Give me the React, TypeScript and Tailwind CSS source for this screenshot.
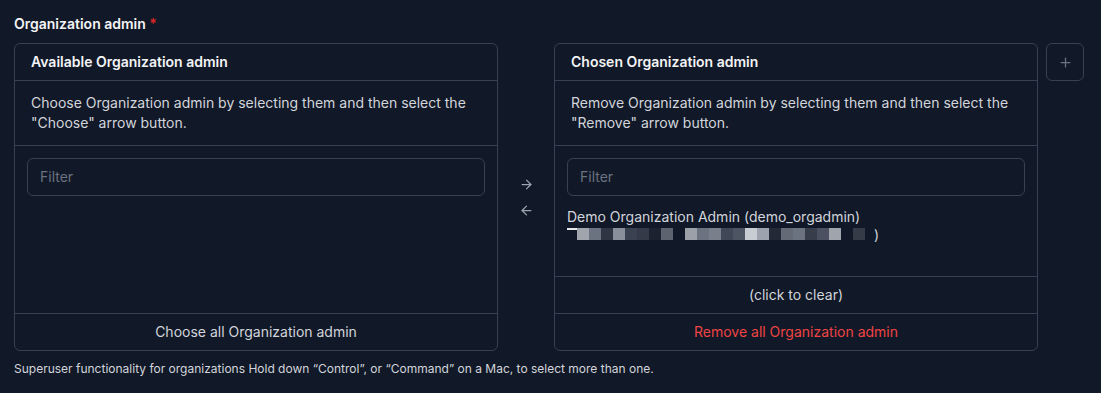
import React from "react";

const blocks: (string | null)[] = [
  "#a1a5ae", "#6b7280", "#2f3542", "#8a909b", "#3a4150", "#343a47", "#1c2230", "#5d6470", null,
  "#9ca0a8", "#6b7280", "#7a808b", "#404756", "#4e5562", "#c8ccd3", "#9ca3af", "#232937",
  "#646a76", "#6b7280", "#373d4a", "#4b5160", "#a0a5ad", null, "#353b47",
];

function ArrowRight() {
  return (
    <svg width="15" height="15" viewBox="0 0 24 24" fill="none" stroke="currentColor" strokeWidth="2" strokeLinecap="round" strokeLinejoin="round">
      <path d="M5 12h14" />
      <path d="m12 5 7 7-7 7" />
    </svg>
  );
}
function ArrowLeft() {
  return (
    <svg width="15" height="15" viewBox="0 0 24 24" fill="none" stroke="currentColor" strokeWidth="2" strokeLinecap="round" strokeLinejoin="round">
      <path d="m12 19-7-7 7-7" />
      <path d="M19 12H5" />
    </svg>
  );
}

function Panel({
  title,
  desc,
  chosen,
  footer,
}: {
  title: string;
  desc: React.ReactNode;
  chosen?: boolean;
  footer: React.ReactNode;
}) {
  return (
    <div className="w-[484px] border border-[#374151] rounded-md flex flex-col">
      <div className="px-4 py-2 text-sm leading-5 font-semibold text-[#f3f4f6] border-b border-[#374151]">{title}</div>
      <div className="px-4 py-3 text-sm leading-5 text-[#d1d5db] border-b border-[#374151]">{desc}</div>
      {chosen ? (
        <>
          <div className="h-[130px] px-3 pt-3 flex flex-col">
            <div className="h-[38px] rounded-md border border-[#374151] px-3 flex items-center text-sm text-[#6b7280]">Filter</div>
            <div className="mt-[11px] flex flex-col">
              <div className="text-sm leading-5 text-[#d1d5db]">Demo Organization Admin (demo_orgadmin)</div>
              <div className="flex items-start h-5 pt-[1px]">
                <div className="w-[10px] h-[12px] relative">
                  <div className="absolute top-0 left-0 w-[10px] h-[2px] bg-[#e5e7eb]" />
                </div>
                {blocks.map((c, i) => (
                  <div key={i} className="w-[12px] h-[12px]" style={{ backgroundColor: c ?? "transparent" }} />
                ))}
                <span className="text-sm leading-[16px] text-[#d1d5db] ml-[9px] -mt-[1px]">)</span>
              </div>
            </div>
          </div>
          <div className="border-t border-[#374151] py-2 text-sm leading-5 text-center text-[#d1d5db]">(click to clear)</div>
        </>
      ) : (
        <div className="h-[167px] px-3 pt-3">
          <div className="h-[38px] rounded-md border border-[#374151] px-3 flex items-center text-sm text-[#6b7280]">Filter</div>
        </div>
      )}
      <div className="border-t border-[#374151] py-2 text-sm leading-5 text-center">{footer}</div>
    </div>
  );
}

export default function App() {
  return (
    <div
      className="min-h-[393px] w-full bg-[#111827] pl-[14px] pt-[14px]"
      style={{ fontFamily: "Inter, 'Noto Sans', sans-serif" }}
    >
      <div className="text-sm leading-5 font-semibold text-[#f3f4f6] mb-[9px]">
        Organization admin <span className="text-[#dc2626]">*</span>
      </div>
      <div className="flex items-start">
        <Panel
          title="Available Organization admin"
          desc={<>Choose Organization admin by selecting them and then select the<br />"Choose" arrow button.</>}
          footer={<span className="text-[#d1d5db]">Choose all Organization admin</span>}
        />
        <div className="w-[56px] self-stretch flex flex-col items-center justify-center gap-[11px] text-[#9ca3af] pt-[1px]">
          <ArrowRight />
          <ArrowLeft />
        </div>
        <Panel
          chosen
          title="Chosen Organization admin"
          desc={<>Remove Organization admin by selecting them and then select the<br />"Remove" arrow button.</>}
          footer={<span className="text-[#ef4444]">Remove all Organization admin</span>}
        />
        <div className="ml-2 w-[38px] h-[38px] rounded-md border border-[#374151] flex items-center justify-center text-[#6b7280]">
          <svg width="15" height="15" viewBox="0 0 24 24" fill="none" stroke="currentColor" strokeWidth="2" strokeLinecap="round">
            <path d="M5 12h14" />
            <path d="M12 5v14" />
          </svg>
        </div>
      </div>
      <div className="mt-[10px] text-xs leading-4 text-[#d1d5db]">
        Superuser functionality for organizations Hold down “Control”, or “Command” on a Mac, to select more than one.
      </div>
    </div>
  );
}
